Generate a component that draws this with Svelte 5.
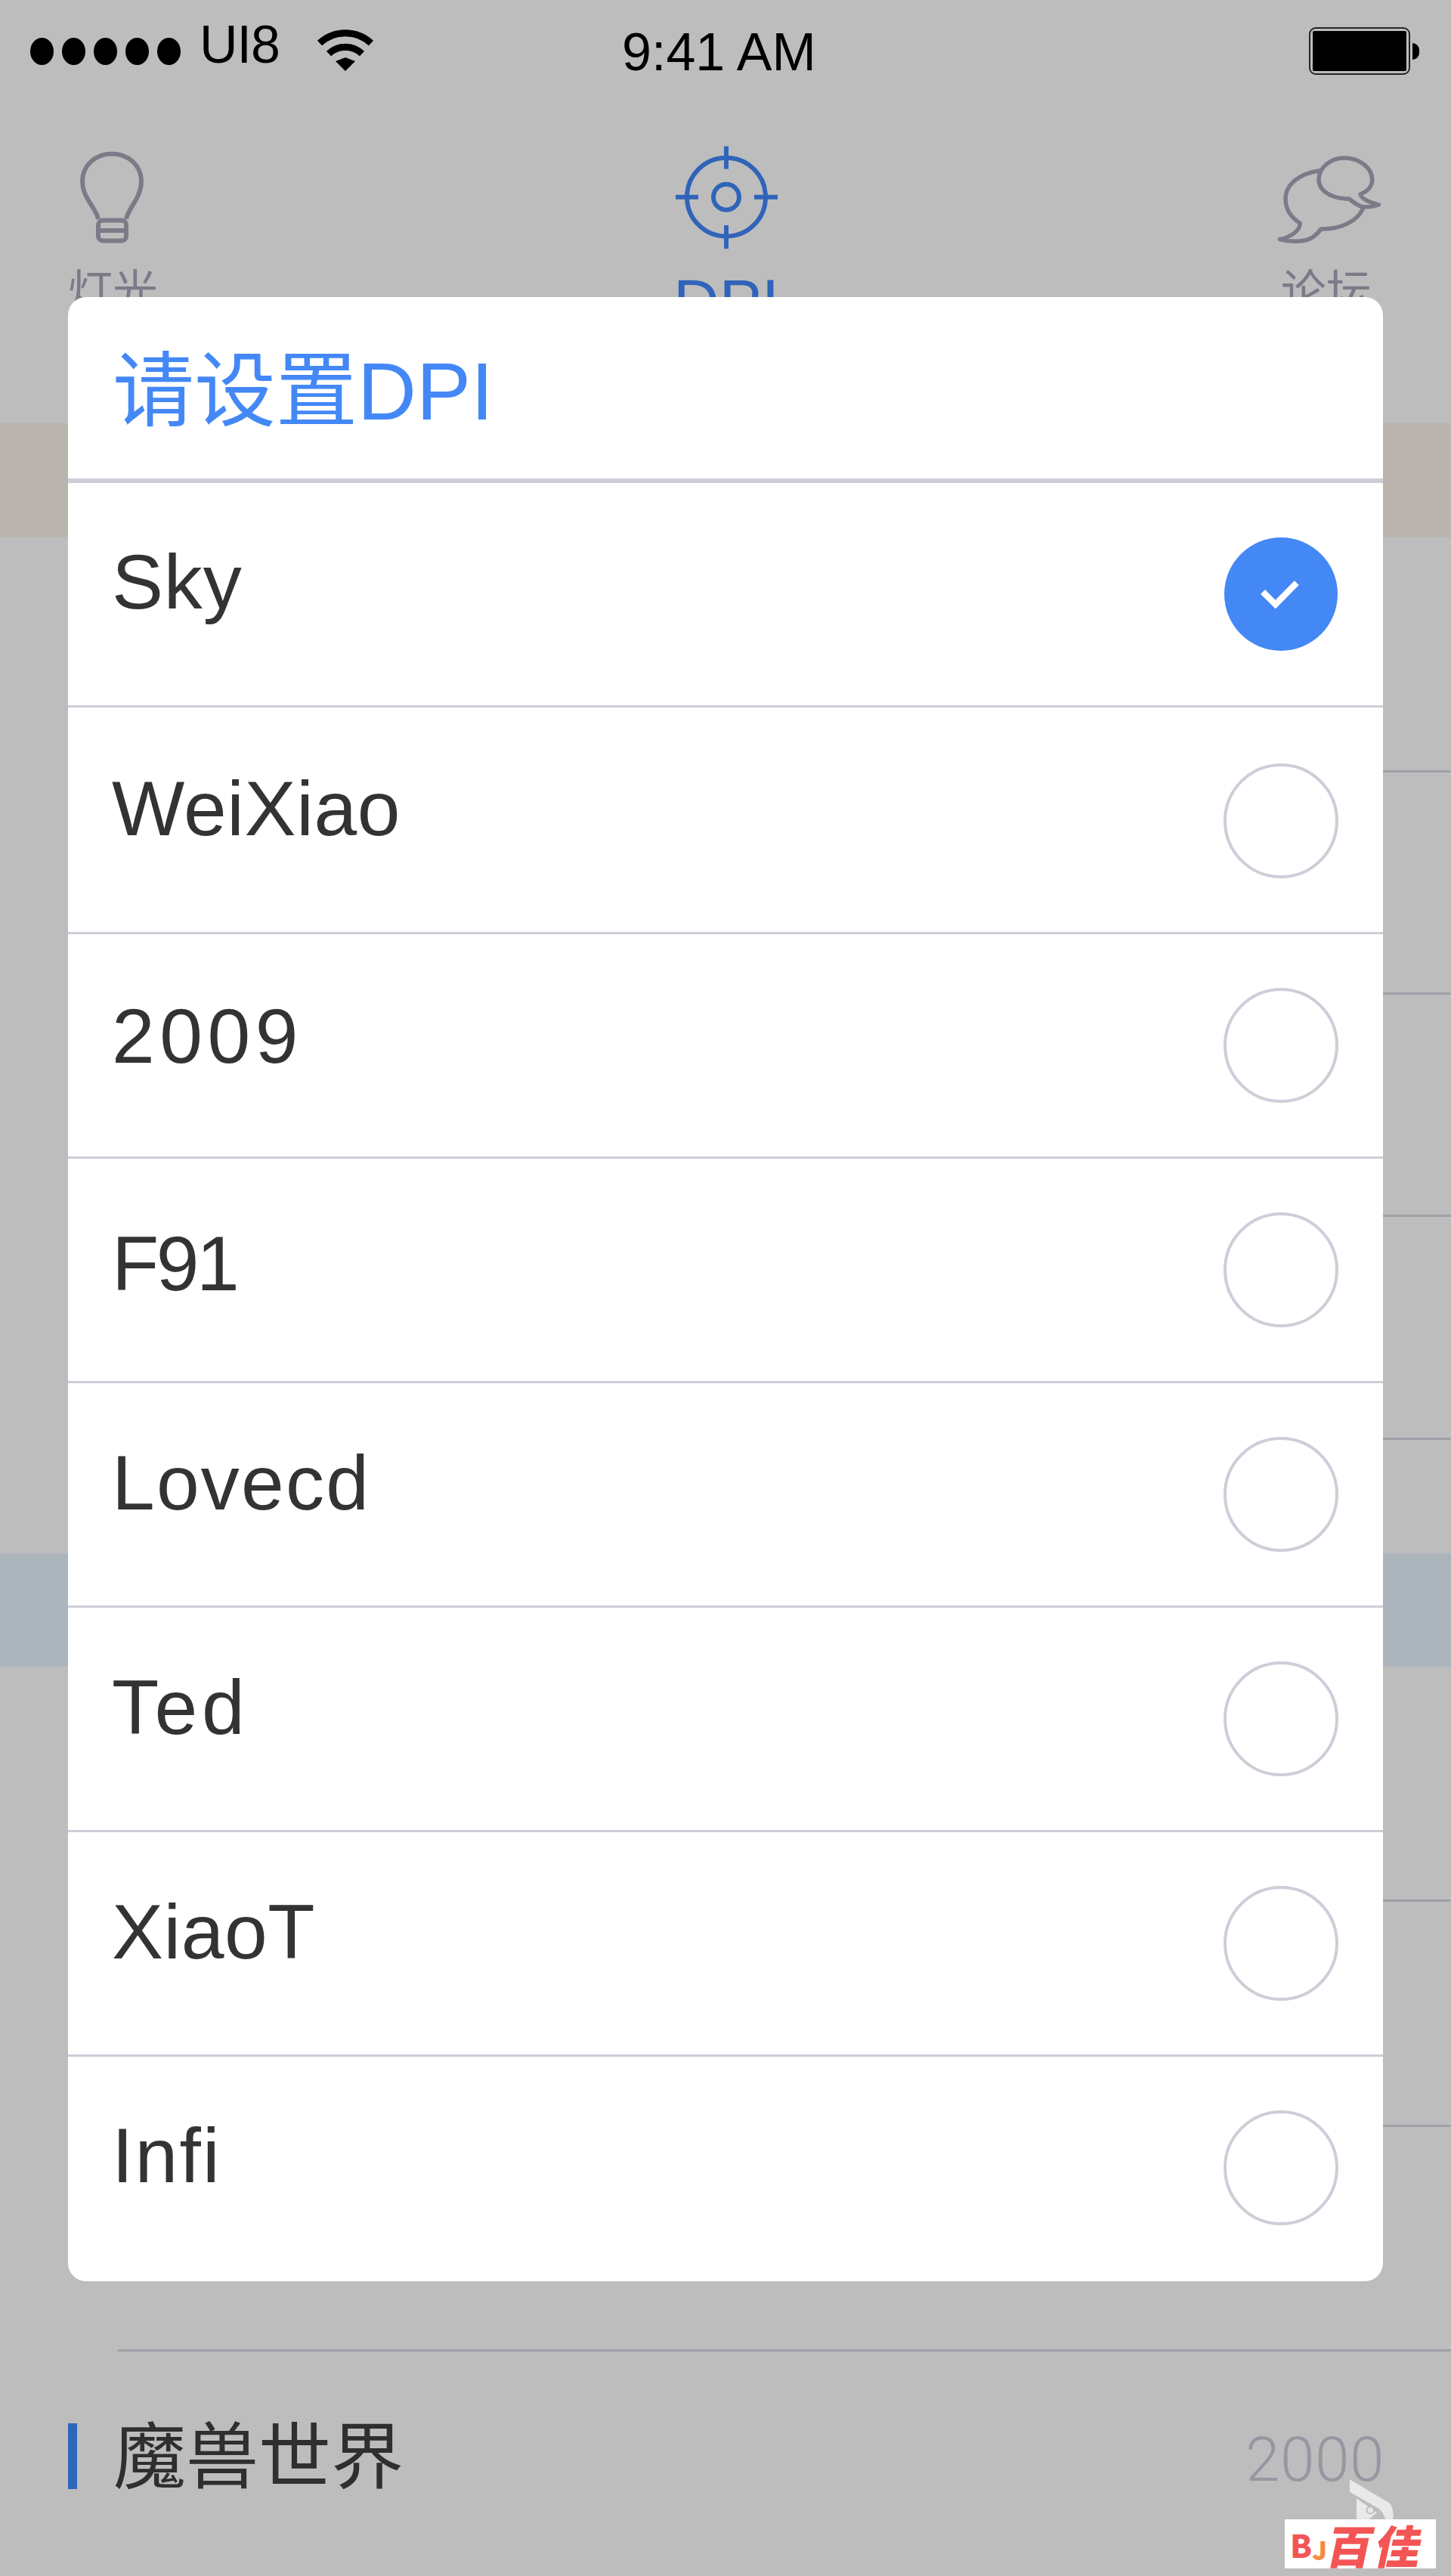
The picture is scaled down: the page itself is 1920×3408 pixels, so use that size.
<script>
  const options = [
    { name: 'Sky', height: 297, top: 0, lift: 32, spacing: 0.8, checked: true },
    { name: 'WeiXiao', height: 300, top: 3, lift: 33, spacing: 0.6 },
    { name: '2009', height: 297, top: 0, lift: 25, spacing: 6.5 },
    { name: 'F91', height: 297, top: 0, lift: 17, spacing: -3.5 },
    { name: 'Lovecd', height: 297, top: 0, lift: 31, spacing: 2.2 },
    { name: 'Ted', height: 297, top: 0, lift: 30, spacing: 5.6 },
    { name: 'XiaoT', height: 297, top: 0, lift: 31, spacing: 0.5 },
    { name: 'Infi', height: 297, top: 0, lift: 33, spacing: 2.2 }
  ];
  const firstGroup = [311, 294, 294, 295];
  const secondGroup = [311, 298, 297];
</script>

<div class="page">
  <header class="status">
    <div class="status-left">
      <span class="dots"><i></i><i></i><i></i><i></i><i></i></span>
      <span class="carrier">UI8</span>
      <svg class="wifi" viewBox="0 0 76 60" width="76" height="60">
        <path d="M4 22 A50 50 0 0 1 72 22" />
        <path d="M16 36 A32 32 0 0 1 60 36" />
        <polygon points="25,46 38,59 51,46 38,41" class="solid" />
      </svg>
    </div>
    <span class="time">9:41 AM</span>
    <div class="battery"><span class="cell"><b></b></span><span class="nub"></span></div>
  </header>

  <nav class="tabs">
    <div class="tab">
      <svg viewBox="0 0 160 160" width="160" height="160" class="icon">
        <g transform="translate(11 5)">
          <path d="M50 100 C48 86 29 72 29 50 C29 29 46 13.5 68 13.5 C90 13.5 107 29 107 50 C107 72 89 86 87 100" />
          <rect x="50" y="101.500" width="37" height="27" rx="6" />
          <path d="M50 115 H87" />
        </g>
      </svg>
      <span class="label">灯光</span>
    </div>
    <div class="tab active">
      <svg viewBox="0 0 160 160" width="160" height="160" class="icon">
        <circle cx="80" cy="75.700" r="52" />
        <circle cx="80" cy="75.700" r="17" />
        <path d="M13 75.700 H43 M117 75.700 H148 M80 8.500 V38.500 M80 113 V144" />
      </svg>
      <span class="label latin">DPI</span>
    </div>
    <div class="tab">
      <svg viewBox="0 0 160 160" width="160" height="160" class="icon thin">
        <g transform="translate(10 10)">
          <path d="M61.700 30.700 C36 34 16 48 16 68 C16 82 24 93 35 100 C36 108 26 118 8.300 121.700 C20 125 38 126 50 120 C55 117 60 112 63 108 C72 108 82 107 90 104 C104 99 116 90 120 76.700" />
          <path d="M100 68 C76 68 60 57 60 43 C60 27 75 14 94 14 C114 14 130.700 27 130.700 43 C130.700 51 125 58 115 62 C116 66 121 71 139.300 76 C130 79 123 79.500 116.700 78.300 C110 76 105 72 100 68 Z" />
        </g>
      </svg>
      <span class="label">论坛</span>
    </div>
  </nav>

  <section class="list">
    <div class="band tan"></div>
    {#each firstGroup as h}
      <div class="line-row" style:height="{h}px"></div>
    {/each}
    <div class="gap"></div>
    <div class="band blue"></div>
    {#each secondGroup as h}
      <div class="line-row" style:height="{h}px"></div>
    {/each}
    <div class="game">
      <span class="bar"></span>
      <span class="game-name">魔兽世界</span>
      <span class="game-value">2000</span>
    </div>
  </section>

  <div class="scrim"></div>

  <div class="dialog">
    <h1 class="title">请设置DPI</h1>
    <ul class="options">
      {#each options as o}
        <li class="option" style:height="{o.height}px" style:padding-top="{o.top}px">
          <span class="name" style:margin-bottom="{o.lift}px" style:letter-spacing="{o.spacing}px">{o.name}</span>
          {#if o.checked}
            <span class="radio on">
              <svg viewBox="0 0 150 150" width="150" height="150">
                <path d="M51 72 L67.700 88.700 L95.800 60.200" />
              </svg>
            </span>
          {:else}
            <span class="radio"></span>
          {/if}
        </li>
      {/each}
    </ul>
  </div>

  <svg class="eagle" viewBox="858 1140 174 158" width="58" height="53">
    <path d="M858 1140 L1012 1232 Q1034 1248 1030 1298 L1000 1298 Q990 1268 972 1255 L858 1190 Z" />
    <path d="M885 1215 L885 1298 L935 1298 L965 1272 Z" />
    <circle cx="940" cy="1262" r="14" class="hole" />
  </svg>

  <div class="mark">
    <span class="mark-b">B</span><span class="mark-j">J</span><span class="mark-cn">百佳</span>
  </div>
</div>

<style>
  :global(body) {
    margin: 0;
    background: #fff;
  }
  .page {
    position: relative;
    width: 1920px;
    height: 3408px;
    overflow: hidden;
    background: #fff;
    font-family: "Liberation Sans", "Noto Sans CJK SC", sans-serif;
  }

  .status {
    display: grid;
    grid-template-columns: 825px auto 1fr;
    height: 180px;
    color: #000;
    align-items: start;
  }
  .status-left {
    display: flex;
    align-items: flex-start;
    padding-left: 40px;
  }
  .dots {
    display: flex;
    gap: 11px;
    margin-top: 50px;
  }
  .dots i {
    width: 31px;
    height: 36px;
    border-radius: 50%;
    background: #000;
  }
  .carrier {
    font-size: 70px;
    line-height: 80px;
    letter-spacing: -1px;
    margin: 19px 0 0 25px;
  }
  .wifi {
    margin: 35px 0 0 49px;
    fill: none;
    stroke: #000;
    stroke-width: 9;
  }
  .wifi .solid {
    fill: #000;
    stroke: none;
  }
  .time {
    font-size: 70px;
    line-height: 80px;
    margin-top: 29px;
    white-space: nowrap;
    margin-left: -2px;
  }
  .battery {
    display: flex;
    align-items: center;
    justify-content: flex-end;
    padding-right: 42px;
    margin-top: 36px;
  }
  .cell {
    display: block;
    box-sizing: border-box;
    width: 134px;
    height: 63px;
    border: 2px solid #333;
    border-radius: 9px;
    padding: 3px;
  }
  .cell b {
    display: block;
    height: 100%;
    background: #000;
    border-radius: 2px;
  }
  .nub {
    width: 9px;
    height: 22px;
    margin-left: 3px;
    background: #000;
    border-radius: 0 11px 11px 0;
  }

  .tabs {
    display: grid;
    grid-template-columns: 298px 1326px 296px;
    height: 380px;
    box-sizing: border-box;
    padding-top: 5px;
    color: #a6a7b8;
  }
  .tab:nth-child(3) {
    width: 262px;
  }
  .tab {
    display: flex;
    flex-direction: column;
    align-items: center;
  }
  .icon {
    fill: none;
    stroke: currentColor;
    stroke-width: 6;
    stroke-linejoin: round;
  }
  .icon.thin {
    stroke-width: 5.500;
  }
  .label {
    font-size: 60px;
    line-height: 70px;
    margin-top: 7px;
  }
  .label.latin {
    font-size: 84px;
    line-height: 90px;
    margin-top: 9px;
  }
  .active {
    color: #4187fb;
  }

  .band {
    height: 151px;
  }
  .tan {
    background: #faf4eb;
  }
  .blue {
    height: 150px;
    background: #e9f3fe;
  }
  .line-row {
    box-sizing: border-box;
    margin-left: 156px;
    border-bottom: 3px solid #d8d8e3;
  }
  .gap {
    height: 150px;
  }
  .game {
    display: flex;
    align-items: center;
    height: 277px;
    padding: 0 88px 0 90px;
  }
  .bar {
    width: 12px;
    height: 87px;
    background: #3d8aff;
    margin-right: 48px;
  }
  .game-name {
    flex: 1;
    font-size: 96px;
    line-height: 110px;
    color: #404040;
    margin-top: 2px;
  }
  .game-value {
    font-family: Roboto, "Liberation Sans", sans-serif;
    font-weight: 300;
    font-size: 82px;
    line-height: 90px;
    letter-spacing: 0.5px;
    color: #ccccd9;
    margin-top: 8px;
  }

  .scrim {
    position: absolute;
    inset: 0;
    background: rgba(0, 0, 0, 0.259);
  }

  .dialog {
    position: absolute;
    left: 90px;
    top: 393px;
    width: 1740px;
    background: #fff;
    border-radius: 24px;
    overflow: hidden;
  }
  .title {
    margin: 0;
    box-sizing: border-box;
    height: 246px;
    padding: 60px 0 0 59px;
    border-bottom: 6px solid #cecdd8;
    font-size: 108px;
    line-height: 130px;
    font-weight: 400;
    color: #4488f6;
  }
  .options {
    list-style: none;
    margin: 0;
    padding: 0;
  }
  .option {
    display: flex;
    align-items: center;
    justify-content: space-between;
    box-sizing: border-box;
    padding: 0 60px 0 58px;
    border-bottom: 3px solid #cecdd8;
  }
  .option:last-child {
    border-bottom-color: transparent;
  }
  .name {
    font-size: 102px;
    line-height: 120px;
    color: #333;
  }
  .radio {
    box-sizing: border-box;
    display: block;
    width: 152px;
    height: 152px;
    margin: -1px;
    border: 4px solid #cecdd8;
    border-radius: 50%;
  }
  .radio.on {
    width: 150px;
    height: 150px;
    margin: 0;
    border: 0;
    background: #4488f6;
  }
  .radio svg {
    display: block;
    fill: none;
    stroke: #fff;
    stroke-width: 8.300;
  }

  .eagle {
    position: absolute;
    left: 1786px;
    top: 3280px;
    fill: #e8e9e9;
  }
  .eagle .hole {
    fill: #e8e9e9;
    stroke: #bdbdbd;
    stroke-width: 6;
  }
  .mark {
    position: absolute;
    left: 1700px;
    top: 3333px;
    width: 200px;
    height: 65px;
    box-sizing: border-box;
    padding-left: 7px;
    background: #fff;
    display: flex;
    align-items: center;
    font-family: "Noto Sans CJK SC", sans-serif;
    font-weight: 900;
    line-height: 60px;
    color: #f35555;
    white-space: nowrap;
  }
  .mark-b {
    font-size: 42px;
  }
  .mark-j {
    font-size: 34px;
    line-height: 44px;
    color: #f58a44;
    margin: 14px 2px 0 0;
  }
  .mark-cn {
    font-size: 60px;
    letter-spacing: 4px;
    transform: skewX(-12deg);
  }
</style>
